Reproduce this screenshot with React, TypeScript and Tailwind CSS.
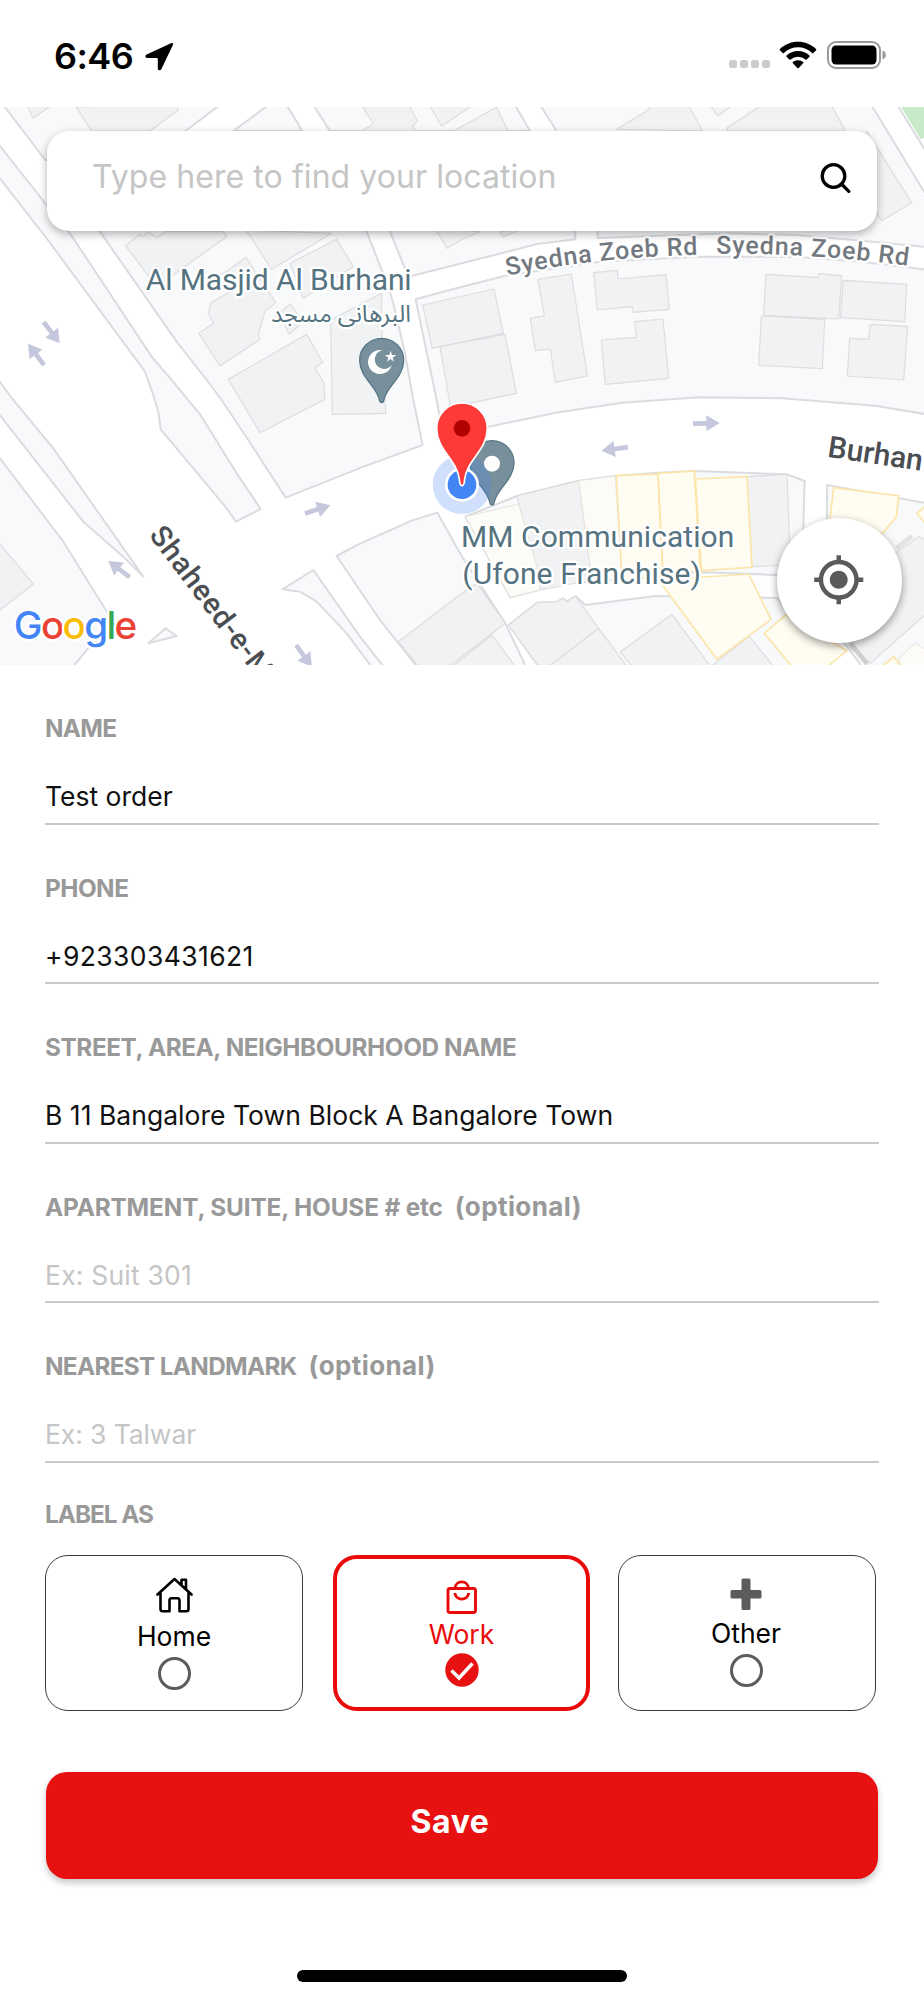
import React from "react";
import { MdMyLocation } from "react-icons/md";

const land = [
  "10,15 660,15 560,90 430,180 136,180",
  "805,15 700,93 907,93 860,15",
  "940,15 990,93 1590,93 1545,15",
  "0,138 136,310 210,400 455,770 515,840 600,943 710,1120 782,1227 708,1265 680,1225 565,1087 482,988 475,935 460,885 435,815 140,415 -10,223 -10,125",
  "210,275 300,395 530,725 620,840 665,900 735,1005 857,1193 1085,1102 1268,1035 1240,900 1215,760 1180,610 1165,560 1100,395 1060,300",
  "1130,300 1170,395 1225,530 1386,490 1611,432 1726,418 1726,300",
  "1620,15 2614,15 2780,288 2780,441 2586,422 2386,405 2186,400 1793,414 1793,300 1668,90",
  "1247,598 1386,560 1516,527 1800,485 2086,470 2386,470 2586,485 2780,509 2780,943 2626,917 2346,895 2096,892 1866,908 1676,937 1466,980 1330,1008 1310,900",
  "-10,833 40,900 160,1045 430,1430 370,1370 250,1265 -10,933",
  "-10,1062 190,1325 330,1550 330,1565 215,1705 -10,1705",
  "445,1630 497,1585 530,1608",
  "1010,1368 1075,1333 1235,1262 1312,1238 1386,1370 1516,1570 1580,1705 1255,1705 1140,1560",
  "848,1468 940,1410 1080,1610 1155,1705 1118,1705 1040,1600 950,1505 900,1475",
  "1396,1250 1551,1188 1736,1142 1846,1128 1976,1118 2083,1113 2361,1123 2414,1143 2406,1428 2106,1417 1686,1452 1531,1492",
  "1526,1575 1611,1508 1671,1505 1689,1495 1701,1505 1726,1488 1756,1515 1966,1488 2331,1494 2500,1705 1620,1705",
  "2481,1155 2780,1210 2780,1705 2590,1705 2481,1560",
];

const buildings = [
  "80,15 100,55 155,15",
  "228,21 275,93 450,93 535,30 530,15",
  "1085,15 1120,72 1085,93 1245,93 1238,78 1252,62 1226,15",
  "1287,15 1325,78 1420,15",
  "1366,90 1489,22 1524,93 1366,93",
  "1850,88 1948,28 1948,15 2065,15 2108,93",
  "2130,15 2153,47 2200,15",
  "2182,93 2182,83 2285,15 2493,15 2537,93",
  "2600,93 2735,308 2645,362 2560,240",
  "376,437 418,403 428,410 445,395 470,413 495,395 670,395 680,410 540,510 470,560",
  "738,390 815,508 995,400",
  "870,490 1010,418 1060,500 910,595",
  "738,473 827,608 795,635 775,700 780,718 660,798 597,700 640,670 625,640 632,608 700,570 655,530",
  "835,640 872,612 910,665 868,703",
  "992,660 1145,580 1145,680 1157,940 997,943",
  "685,838 920,703 968,787 945,803 972,850 975,898 780,998",
  "1305,385 1342,445 1386,418 1440,395",
  "1500,395 1510,410 1560,390",
  "1268,615 1482,567 1510,700 1297,745",
  "1320,740 1515,703 1549,880 1352,922",
  "1614,538 1714,522 1762,828 1666,847 1651,747 1606,752 1591,655 1633,647",
  "1781,518 1852,511 1854,537 1998,524 2008,628 1900,637 1896,620 1792,630",
  "1904,665 1989,657 2006,835 1816,853 1804,720 1909,712",
  "2298,523 2454,533 2456,521 2525,527 2516,657 2291,646",
  "2530,541 2720,553 2714,665 2521,653",
  "2284,648 2474,658 2467,806 2276,796",
  "2611,673 2723,679 2711,840 2542,828 2549,715 2606,718",
  "-10,1320 100,1452 -10,1538",
  "1195,1625 1386,1480 1431,1450 1516,1570 1340,1705 1260,1705",
  "1350,1705 1476,1605 1550,1705",
  "1551,1188 1736,1142 1771,1400 1776,1440 1621,1470",
  "2241,1130 2361,1123 2371,1395 2256,1400",
  "1526,1575 1611,1508 1671,1505 1689,1495 1701,1505 1726,1488 1796,1585 1640,1705 1620,1705",
  "1640,1705 1796,1585 1885,1705",
  "1861,1655 2016,1543 2136,1705 1900,1705",
  "2125,1705 2248,1608 2325,1705",
  "2600,1420 2756,1310 2780,1320 2780,1540 2611,1690 2530,1630",
];

const pale = [
  "1396,1250 1556,1212 1611,1400 1621,1470 1531,1492",
  "1736,1142 1846,1128 1866,1440 1776,1440",
  "2696,1675 2746,1630 2780,1650 2780,1705 2705,1705",
];

const yellow = [
  "1849,1127 1974,1122 1989,1430 1866,1440",
  "1974,1120 2083,1113 2101,1412 1989,1420",
  "2086,1137 2241,1130 2256,1402 2104,1412",
  "1976,1440 2246,1422 2313,1558 2151,1678",
  "2293,1600 2356,1545 2541,1652 2475,1705 2380,1705",
  "2501,1163 2696,1187 2689,1250 2648,1300 2486,1290",
  "2751,1240 2780,1215 2780,1275",
  "2645,1700 2681,1670 2705,1700",
];

const arrows = [
  [155, 698, 53],
  [108, 763, 233],
  [953, 1228, -18],
  [357, 1407, 217],
  [912, 1668, 54],
  [2119, 970, -1],
  [1844, 1047, 172],
];

const halo = {
  stroke: "#fff",
  strokeWidth: 14,
  strokeLinejoin: "round" as const,
  paintOrder: "stroke",
};

function GreyPin({ x, y, children }: { x: number; y: number; children: React.ReactNode }) {
  return (
    <g transform={`translate(${x} ${y})`}>
      <path
        d="M0 127C-3 127-6 124-7 118C-14 78-66 52-66 0A66 66 0 0 1 66 0C66 52 14 78 7 118C6 124 3 127 0 127Z"
        fill="#78909c"
        stroke="#557785"
        strokeWidth="4"
      />
      {children}
    </g>
  );
}

function MapCanvas() {
  return (
    <svg viewBox="0 21 2772 1674" className="block h-full w-full" preserveAspectRatio="none">
      <rect y="21" width="2772" height="1674" fill="#fff" />
      <g fill="#f8f9fb" stroke="#dbdce0" strokeWidth="6" strokeLinejoin="round">
        {land.map((p) => <polygon key={p} points={p} />)}
      </g>
      <path d="M2700 15L2780 15L2780 110L2762 118Z" fill="#c8eac9" />
      <path d="M2692 15L2780 158" stroke="#dbdce0" strokeWidth="6" />
      <g fill="#f1f2f4" stroke="#dcdddf" strokeWidth="3.5" strokeLinejoin="round">
        {buildings.map((p) => <polygon key={p} points={p} />)}
      </g>
      <g fill="#fcfbf7" stroke="#e6e3dd" strokeWidth="3">
        {pale.map((p) => <polygon key={p} points={p} />)}
      </g>
      <g fill="#fffcf1" stroke="#fce5a9" strokeWidth="5">
        {yellow.map((p) => <polygon key={p} points={p} />)}
      </g>
      <path d="M2551 1630L2602 1692" stroke="#cfd0d0" strokeWidth="14" />
      <path d="M2690 1345L2736 1308" stroke="#e1e2e3" strokeWidth="14" />
      <g fill="#c5c8dc">
        {arrows.map(([x, y, r]) => (
          <path key={x} d="M-40-7H0V-24L40 0L0 24V7H-40Z" transform={`translate(${x} ${y}) rotate(${r})`} />
        ))}
      </g>

      <g fontFamily="Roboto, sans-serif" fill="#557380" fontSize="90" {...halo}>
        <text x="437" y="571" textLength="798">Al Masjid Al Burhani</text>
        <text x="1383" y="1340" textLength="820">MM Communication</text>
        <text x="1387" y="1451" textLength="716">(Ufone Franchise)</text>
        <text
          x="813"
          y="665"
          fontSize="70"
          fontFamily="'Noto Sans Arabic', 'DejaVu Sans', sans-serif"
          textLength="420"
          lengthAdjust="spacingAndGlyphs"
        >
          البرهانی مسجد
        </text>
      </g>
      <defs>
        <path id="road-west" d="M1522 527Q1780 472 2110 464" />
        <path id="road-east" d="M2149 461Q2440 458 2750 501" />
      </defs>
      <g fontFamily="Roboto, sans-serif" fontWeight="500" {...halo}>
        <text fontSize="75" fill="#737980">
          <textPath href="#road-west" textLength="575">Syedna Zoeb Rd</textPath>
        </text>
        <text fontSize="75" fill="#737980">
          <textPath href="#road-east" textLength="577">Syedna Zoeb Rd</textPath>
        </text>
        <text fontSize="90" fill="#4a4d52" transform="translate(2480 1070) rotate(8.5)">Burhan</text>
        <text fontSize="88" fill="#4a4d52" letterSpacing="2.4" transform="translate(445 1306) rotate(52.8)">Shaheed-e-M</text>
      </g>

      <GreyPin x={1145} y={781}>
        <path d="M3-30A36 36 0 1 0 30 14A28 28 0 1 1 3-30Z" fill="#fff" />
        <path d="M27-29L31-16L44-16L33-8L37 4L27-4L16 4L20-8L10-16L23-16Z" fill="#fff" />
      </GreyPin>
      <GreyPin x={1476} y={1088}>
        <circle cy="3" r="24" fill="#fff" />
      </GreyPin>

      <circle cx="1386" cy="1154" r="88" fill="#4285f4" fillOpacity=".25" />
      <circle cx="1386" cy="1154" r="51" fill="#fff" />
      <circle cx="1386" cy="1154" r="43" fill="#4285f4" />
      <path
        d="M1386 1157C1380 1157 1379 1150 1378 1138C1372 1080 1310 1050 1310 985A76 76 0 0 1 1462 985C1462 1050 1400 1080 1394 1138C1393 1150 1392 1157 1386 1157Z"
        fill="#fe3a38"
        stroke="#fff"
        strokeWidth="5"
      />
      <circle cx="1386" cy="985" r="25" fill="#b10201" />

      <text
        x="41"
        y="1616"
        fontFamily="Inter, sans-serif"
        fontWeight="500"
        fontSize="116"
        textLength="371"
        {...halo}
      >
        <tspan fill="#4285f4">G</tspan>
        <tspan fill="#ea4335">o</tspan>
        <tspan fill="#fbbc05">o</tspan>
        <tspan fill="#4285f4">g</tspan>
        <tspan fill="#34a853">l</tspan>
        <tspan fill="#ea4335">e</tspan>
      </text>
    </svg>
  );
}

function StatusBar() {
  return (
    <header className="flex h-[107px] items-start justify-between pl-[54px] pr-[37px] pt-[38px]">
      <div className="flex items-center gap-3">
        <span className="text-[36px] font-semibold leading-9 tracking-[-0.6px] text-black">6:46</span>
        <svg width="29" height="29" viewBox="0 0 29 29">
          <path
            d="M26 1.2L1.6 12.6C-.4 13.6.2 16 2.4 16H11.5C12.4 16 12.8 16.4 12.8 17.3V26.4C12.8 28.6 15.4 29 16.3 27.2L27.9 3C28.6 1.5 27.4.5 26 1.2Z"
            fill="#000"
          />
        </svg>
      </div>
      <div className="-mt-px flex h-9 items-center">
        <div className="mr-[9px] mt-[18px] flex gap-[3px]">
          {[0, 1, 2, 3].map((i) => (
            <i key={i} className="block h-2 w-2 rounded-[2.5px] bg-[#cbcbcb]" />
          ))}
        </div>
        <svg width="38" height="28" viewBox="0 0 38 28" className="mr-[10px]">
          <path
            d="M19 .8C12 .8 5.700 3.500 1 7.900C.5 8.300.5 8.800 .9 9.200L3.600 11.900C4 12.300 4.500 12.300 4.900 11.900A20.500 20.500 0 0 1 33.100 11.900C33.500 12.300 34 12.300 34.400 11.900L37.100 9.200C37.500 8.800 37.500 8.300 37 7.900C32.300 3.500 26 .8 19 .8Z M19 10C14.600 10 10.600 11.700 7.600 14.400C7.100 14.800 7.100 15.300 7.500 15.700L10.300 18.500C10.700 18.900 11.200 18.900 11.600 18.500A11 11 0 0 1 26.400 18.500C26.800 18.900 27.300 18.900 27.700 18.500L30.500 15.700C30.900 15.300 30.900 14.800 30.400 14.400C27.400 11.700 23.400 10 19 10Z M19 19.300C17 19.300 15.300 20 13.900 21C13.500 21.400 13.500 21.900 13.900 22.300L18.300 26.900C18.700 27.300 19.300 27.300 19.700 26.900L24.100 22.300C24.500 21.900 24.500 21.400 24.100 21C22.700 20 21 19.300 19 19.300Z"
            fill="#000"
          />
        </svg>
        <svg width="60" height="28" viewBox="0 0 60 28">
          <rect x="1" y="1" width="52" height="26" rx="8" fill="none" stroke="#9a9a9a" strokeWidth="2" />
          <rect x="4.500" y="4.500" width="45" height="19" rx="4.500" fill="#000" />
          <path d="M55.500 9.500C60 11 60 17 55.500 18.500Z" fill="#9a9a9a" />
        </svg>
      </div>
    </header>
  );
}

type FieldProps = {
  label: string;
  labelClass: string;
  value: string;
  valueClass: string;
  optional?: boolean;
};

function Field({ label, labelClass, value, valueClass, optional }: FieldProps) {
  return (
    <div className="flex h-[159.6px] flex-col border-b-2 border-[#c9c9c9] pt-12">
      <div className="flex h-[30px] items-center whitespace-nowrap text-[24.300px] font-bold leading-[30px] text-[#999]">
        <span className={labelClass}>{label}</span>
        {optional && <span className="ml-[12px] text-[26px] tracking-[0.4px]">(optional)</span>}
      </div>
      <div className={`mt-[38px] h-[30px] whitespace-nowrap text-[26.500px] leading-[30px] ${valueClass}`}>{value}</div>
    </div>
  );
}

const fields: FieldProps[] = [
  { label: "NAME", labelClass: "tracking-[-0.7px]", value: "Test order", valueClass: "text-[#111]" },
  { label: "PHONE", labelClass: "tracking-[-0.5px]", value: "+923303431621", valueClass: "text-[#111] tracking-[0.4px]" },
  {
    label: "STREET, AREA, NEIGHBOURHOOD NAME",
    labelClass: "tracking-[-0.4px]",
    value: "B 11 Bangalore Town Block A Bangalore Town",
    valueClass: "text-[#111] tracking-[0.03px]",
  },
  {
    label: "APARTMENT, SUITE, HOUSE # etc",
    labelClass: "tracking-[-0.12px]",
    value: "Ex: Suit 301",
    valueClass: "text-[#c5c5c5] tracking-[0.2px]",
    optional: true,
  },
  {
    label: "NEAREST LANDMARK",
    labelClass: "tracking-[-0.66px]",
    value: "Ex: 3 Talwar",
    valueClass: "text-[#c5c5c5] tracking-[-0.1px]",
    optional: true,
  },
];

function Radio() {
  return <span className="h-[33px] w-[33px] rounded-full border-[3px] border-[#5c5c5c]" />;
}

function LabelChoices() {
  return (
    <div className="mt-[26px] flex">
      <button className="mr-[30px] flex h-[156px] w-[258px] flex-col items-center rounded-[23px] border-[1.500px] border-[#3c3c3c] pt-[21px]">
        <svg width="37" height="36" viewBox="0 0 37 36" fill="none" stroke="#000" strokeWidth="2.600" strokeLinejoin="round" strokeLinecap="round">
          <path d="M1.500 17.500L18.500 2L35.500 17.500M4.500 15V32Q4.500 34.200 6.500 34.200H13.500V23.500Q13.500 21.200 15.500 21.200H21.500Q23.500 21.200 23.500 23.500V34.200H30.500Q32.500 34.200 32.500 32V15M25.500 7.500V2.800H30V12" />
        </svg>
        <span className="mt-[8px] text-[26.500px] leading-[30px] text-black">Home</span>
        <span className="mt-[6px] flex"><Radio /></span>
      </button>
      <button className="mr-[28px] flex h-[156px] w-[257px] flex-col items-center rounded-[24px] border-[4.500px] border-[#ea0a0a] pt-[19px]">
        <svg width="32" height="37" viewBox="0 0 32 37" fill="none" stroke="#ea0a0a" strokeWidth="2.900" strokeLinejoin="round">
          <rect x="2" y="10.500" width="27.500" height="24" rx="2" />
          <path d="M8.800 10.500A7 7.500 0 0 1 22.700 10.500M8.800 15A7 7 0 0 0 22.700 15" />
        </svg>
        <span className="mt-[4px] text-[26.500px] leading-[30px] text-[#ea0a0a]">Work</span>
        <svg width="34" height="34" viewBox="0 0 34 34" className="mt-[4px]">
          <circle cx="17" cy="17" r="16.700" fill="#e81111" />
          <path d="M6.500 17.500L14 25L27.500 10.500" fill="none" stroke="#fff" strokeWidth="3.500" />
        </svg>
      </button>
      <button className="flex h-[156px] w-[258px] flex-col items-center rounded-[23px] border-[1.500px] border-[#3c3c3c] pr-[2px] pt-[22px]">
        <svg width="32" height="33" viewBox="0 0 32 33">
          <path
            d="M13 .5H19Q20.500 .5 20.500 2V12H30Q31.500 12 31.500 13.500V19Q31.500 20.500 30 20.500H20.500V30.500Q20.500 32 19 32H13Q11.500 32 11.500 30.500V20.500H2Q.5 20.500 .5 19V13.500Q.5 12 2 12H11.500V2Q11.500 .5 13 .5Z"
            fill="#5c5c5c"
          />
        </svg>
        <span className="mt-[7px] text-[26.500px] leading-[30px] text-black">Other</span>
        <span className="mt-[6px] flex"><Radio /></span>
      </button>
    </div>
  );
}

export default function App() {
  return (
    <main className="flex h-[2000px] w-[924px] flex-col overflow-hidden bg-white font-['Inter',sans-serif]">
      <StatusBar />
      <section className="relative h-[558px] overflow-hidden">
        <MapCanvas />
        <div className="absolute left-[47px] top-6 flex h-[100px] w-[830px] items-center justify-between rounded-[22px] bg-white pl-[45px] pr-[26px] shadow-[0_3px_8px_rgba(0,0,0,0.3)]">
          <span className="mb-[9px] whitespace-nowrap text-[32px] tracking-[0.07px] text-[#c5c5c5]">Type here to find your location</span>
          <svg width="31" height="31" viewBox="0 0 31 31" className="mb-[5px]" fill="none" stroke="#000" strokeWidth="3.300" strokeLinecap="round">
            <circle cx="13.500" cy="13" r="11.300" />
            <path d="M21.500 21L28.800 28.300" />
          </svg>
        </div>
        <button className="absolute left-[777px] top-[411px] flex h-[125px] w-[125px] items-center justify-center rounded-full bg-white pb-px pr-px shadow-[0_3px_8px_rgba(0,0,0,0.4)]">
          <MdMyLocation size={53.5} color="#5a5a5a" />
        </button>
      </section>
      <section className="flex flex-col pl-[45px] pr-[45px]">
        {fields.map((f) => <Field key={f.label} {...f} />)}
        <div className="mt-[36px] h-[30px] text-[24.300px] font-bold leading-[30px] tracking-[-1px] text-[#999]">LABEL AS</div>
        <LabelChoices />
        <button className="ml-px mt-[61px] flex h-[107px] w-[832px] items-center justify-center rounded-[21px] bg-[#e81111] pb-[6px] pr-6 text-[32px] font-bold tracking-[0.6px] text-white shadow-[0_4px_7px_rgba(0,0,0,0.22)]">
          Save
        </button>
      </section>
      <div className="ml-[297px] mt-[91px] h-[12px] w-[330px] shrink-0 rounded-full bg-black" />
    </main>
  );
}
